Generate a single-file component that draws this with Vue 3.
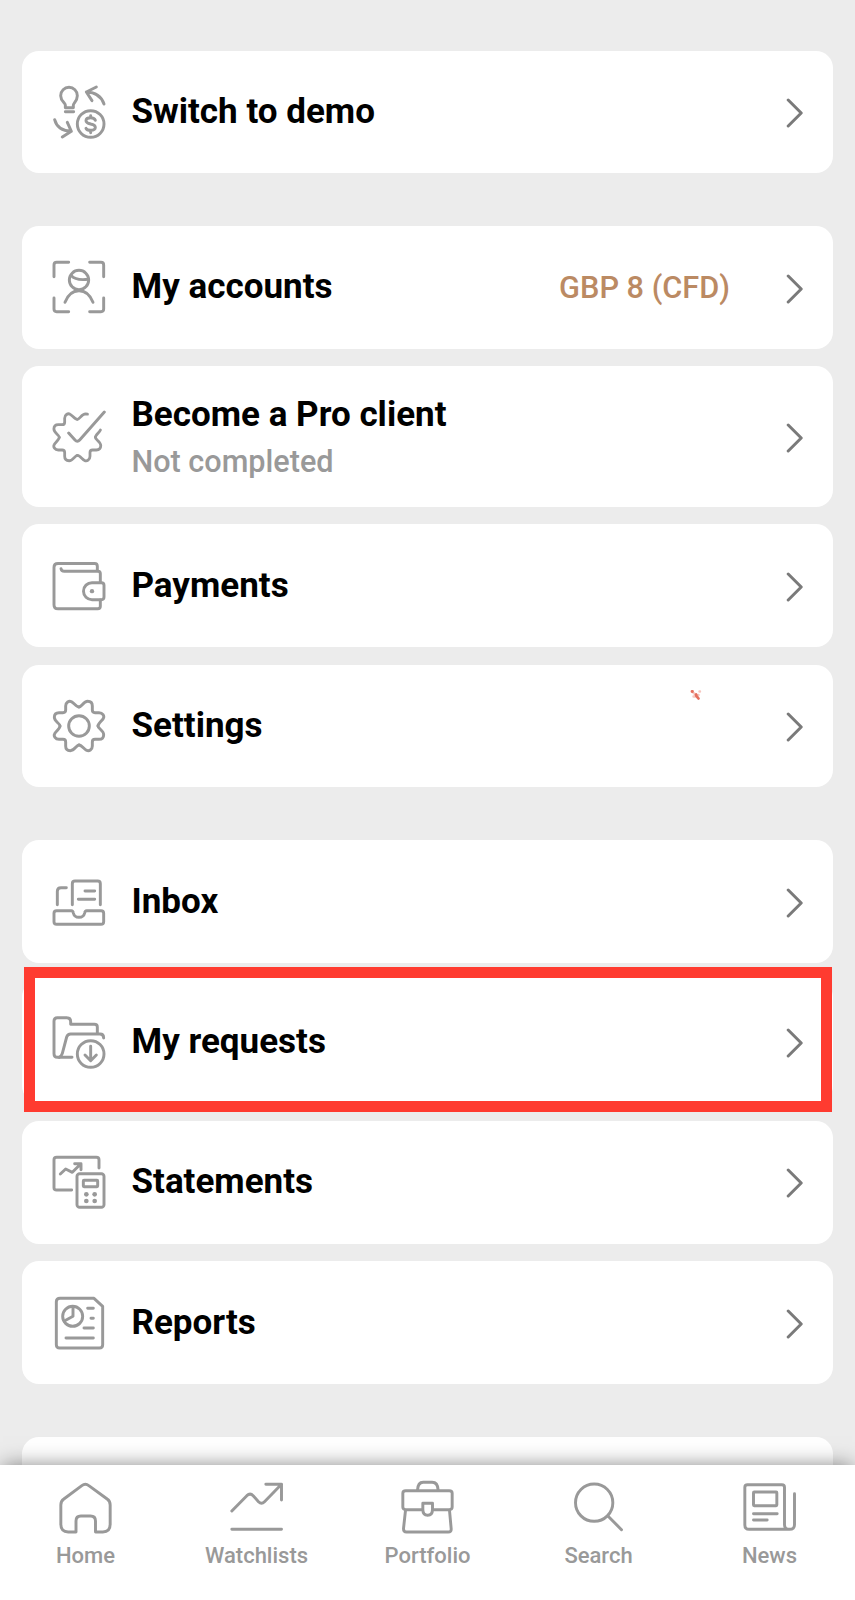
<template>
  <div class="screen">
    <main class="list">
      <section v-for="(group, g) in groups" :key="g" class="group">
        <div
          v-for="item in group"
          :key="item.title"
          class="card"
          :class="{ tall: item.sub, marked: item.marked }"
        >
          <svg class="icon" viewBox="0 0 162 162" v-html="icons[item.icon]"></svg>
          <div class="text">
            <div class="title">{{ item.title }}</div>
            <div v-if="item.sub" class="sub">{{ item.sub }}</div>
          </div>
          <div v-if="item.value" class="value">{{ item.value }}</div>
          <svg class="chevron" viewBox="0 0 18 30"><path d="M2.2 2 L15.2 15 L2.2 28" /></svg>
          <svg v-if="item.spark" class="spark" viewBox="0 0 12 12">
            <path class="soft" d="M3.500 4 L5 5 M9.500 2.500 H10 M3.500 7.500 H5 M8 6 H8.500" />
            <path d="M2 2.500 H2.500 M6 5.500 L6.500 7 L8.500 9.500" />
          </svg>
        </div>
      </section>
      <section class="group">
        <div class="card"></div>
      </section>
    </main>

    <nav class="tabs">
      <a v-for="tab in tabs" :key="tab.label" class="tab">
        <svg class="icon" viewBox="0 0 162 162" v-html="icons[tab.icon]"></svg>
        <span class="label">{{ tab.label }}</span>
      </a>
    </nav>
  </div>
</template>

<script setup>
const groups = [
  [{ title: 'Switch to demo', icon: 'swap' }],
  [
    { title: 'My accounts', icon: 'account', value: 'GBP 8 (CFD)' },
    { title: 'Become a Pro client', icon: 'pro', sub: 'Not completed' },
    { title: 'Payments', icon: 'wallet' },
    { title: 'Settings', icon: 'gear', spark: true },
  ],
  [
    { title: 'Inbox', icon: 'inbox' },
    { title: 'My requests', icon: 'requests', marked: true },
    { title: 'Statements', icon: 'statements' },
    { title: 'Reports', icon: 'reports' },
  ],
]

const tabs = [
  { label: 'Home', icon: 'home' },
  { label: 'Watchlists', icon: 'trend' },
  { label: 'Portfolio', icon: 'case' },
  { label: 'Search', icon: 'search' },
  { label: 'News', icon: 'news' },
]

// one quarter of the cog outline, rotated around the centre
const cog = 'M0 -57 C8 -57 13 -74 26 -74 C36 -74 40 -67 40 -60 V-48 Q40 -40 48 -40 H60 C71 -40 77 -30 73 -23 C70 -16 57 -8 57 0'
const turn = (deg) => `<path transform="rotate(${deg})" d="${cog}"/>`

const icons = {
  swap: `<path d="M40 68 V60 C40 54 26 48 26 32 A25 25 0 0 1 76 32 C76 48 64 54 64 60 V68 Z M40 80 H65"/>
    <path d="M133 6 L103 21 L120 47 M103 21 Q144 22 156 57"/>
    <path d="M31 156 L58 139 L46 112 M8 104 Q16 137 58 139"/>
    <circle cx="116" cy="117" r="40"/>
    <path d="M130 106 C128 100 123 98 116 98 C108 98 102 101 102 107 C102 113 108 115 116 117 C125 119 130 121 130 127 C130 133 124 136 116 136 C109 136 104 135 102 130 M116 92 V98 M116 136 V143"/>`,
  account: `<path d="M6 50 V15 Q6 7 14 7 H50 M113 7 H147 Q155 7 155 15 V50 M155 114 V147 Q155 155 147 155 H113 M50 155 H14 Q6 155 6 147 V114"/>
    <circle cx="81" cy="60" r="29"/>
    <path d="M58 47 Q70 62 108 58 M39 127 Q52 92 81 92 Q110 92 123 127"/>`,
  pro: `<g transform="translate(76 85) scale(.95)">${turn(90)}${turn(180)}${turn(270)}
    <path d="M0 -57 C8 -57 13 -74 26 -74 L32 -73 M73 -23 C70 -16 57 -8 57 0"/></g>
    <path d="M50 72 L69 93 Q76 101 83 93 L157 9"/>`,
  wallet: `<path d="M145 123 V142 Q145 149.500 137 149.500 H18 Q6 149.500 6 137 V25 Q6 13.500 18 13.500 H128 Q136 13.500 136 22 V35"/>
    <path d="M27 29 Q28 37 37 37 H138 Q145 37 145 44 V70"/>
    <path d="M120 71 H148 Q156 71 156 79 V114 Q156 122 148 122 H120 A25.500 25.500 0 0 1 120 71"/>
    <circle class="dot" cx="120" cy="96.500" r="6.500"/>`,
  gear: `<g transform="translate(81 81)">${turn(0)}${turn(90)}${turn(180)}${turn(270)}<circle r="31"/></g>`,
  inbox: `<path d="M14 110 H58 Q63 110 64 117 Q67 130 81 130 Q95 130 98 117 Q99 110 104 110 H147 Q155 110 155 118 V143 Q155 151 147 151 H14 Q6 151 6 143 V118 Q6 110 14 110 Z"/>
    <path d="M61 92 V29 Q61 21 69 21 H137 Q145 21 145 29 V92 M99 51 H128 M79 76 H128 M16 92 V52 Q16 41 27 41 H43"/>`,
  requests: `<path d="M60 127 H16 Q6 127 6 116 V18 Q6 8 16 8 H44 Q56 8 56 20 V28 H127 Q136 28 136 36 V55"/>
    <path d="M22 127 Q29 122 31 115 L44 66 Q47 57 56 57 H144 Q155 57 155 69"/>
    <circle cx="116" cy="117" r="40"/>
    <path d="M116 94 V136 M99 120 L116 137 L133 120"/>`,
  statements: `<path d="M59 105 H14 Q6 105 6 98 V14 Q6 7 14 7 H133 Q141 7 141 14 V39"/>
    <path d="M25 57 L41 42 L61 52 L86 27 M68 26 H87 V44"/>
    <rect x="75" y="56" width="81" height="101" rx="8"/>
    <rect x="94" y="76" width="43" height="19" rx="2"/>
    <g class="dot"><circle cx="103" cy="118" r="7"/><circle cx="128" cy="118" r="7"/><circle cx="103" cy="138" r="7"/><circle cx="128" cy="138" r="7"/></g>`,
  reports: `<path d="M24 7 H126 L152 31 V146 Q152 156 142 156 H23 Q13 156 13 146 V17 Q13 7 24 7 Z"/>
    <circle cx="62" cy="61" r="30"/>
    <path d="M63 32 V61 L37 75 M107 37 H124 M117 67 H124 M96 96 H124 M42 126 H124"/>`,
  home: `<path d="M52.500 156 H29 Q7 156 7 133 V75 Q7 63 16 57 L70 17 Q80.500 9 91 17 L146 57 Q155 63 155 75 V133 Q155 156 133 156 H111 V123 Q111 108 96 108 H67 Q52.500 108 52.500 123 Z"/>`,
  trend: `<path d="M7 93 L52 47 Q62 38 71 47 L87 65 Q96 74 105 65 L156 13 M109 13 H156 V60 M7 148 H156"/>`,
  case: `<path d="M51 31 Q52 7 68 7 H95 Q112 7 113 31"/>
    <path d="M65 89 H16 Q7 89 7 81 V40 Q7 32 16 32 H146 Q155 32 155 40 V81 Q155 89 146 89 H98"/>
    <path d="M67 70 H96 V88 Q96 106 81.500 106 Q67 106 67 88 Z"/>
    <path d="M15 91 L9 146 Q9 156 18 156 H143 Q153 156 152 146 L147 91"/>`,
  search: `<circle cx="68" cy="68" r="56"/><path d="M110 109 L150 149"/>`,
  news: `<path d="M141 148 H20 Q7 148 7 135 V22 Q7 14 15 14 H118 Q126 14 126 22 V134 Q126 148 141 148 Q156 148 156 134 V41"/>
    <rect x="33" y="36" width="70" height="41" rx="2"/>
    <path d="M33 101 H104 M33 120 H74"/>`,
}
</script>

<style>
body{margin:0;background:#ececec}
</style>

<style scoped>
.screen{display:flex;flex-direction:column;height:1600px;overflow:hidden;background:#ececec;font-family:Roboto,"Liberation Sans",sans-serif}
.list{flex:1;min-height:0;overflow:hidden;display:flex;flex-direction:column;gap:52.7px;padding:50.5px 22px 0}
.group{display:flex;flex-direction:column;gap:17.7px;flex:none}
.card{position:relative;display:flex;align-items:center;height:122.7px;box-sizing:border-box;padding:0 29px 0 30px;border-radius:17px;background:#fff}
.card.tall{height:140.4px}
.icon{width:54px;height:54px;flex:none;fill:none;stroke:#999;stroke-width:8.8;stroke-linecap:round;stroke-linejoin:round}
.icon :deep(.dot){fill:#999;stroke:none}
.text{flex:1;margin-left:25.5px}
.title{font-size:35px;line-height:42px;font-weight:700;color:#000;position:relative;top:.2px}
.tall .title{top:.6px}
.sub{position:relative;top:.6px;font-size:30.6px;line-height:36px;margin-top:8px;font-weight:500;color:#999}
.value{position:relative;top:.5px;font-size:30.7px;line-height:36px;font-weight:500;color:#bb8a63;margin-right:56px}
.chevron{position:relative;top:1.3px;width:18px;height:30px;flex:none;fill:none;stroke:#7a7a7a;stroke-width:3;stroke-linecap:round;stroke-linejoin:round}

/* red frame lies over the card and sticks out of it top and bottom */
.marked{z-index:1}
.marked::before{content:"";position:absolute;z-index:-1;left:2px;right:1px;top:-13.5px;bottom:-9px;border:11px solid #ff3b30;background:#fff}

.spark{position:absolute;right:131px;top:24px;width:12px;height:12px;fill:none;stroke:#e5705f;stroke-width:2.8;stroke-linecap:round}
.spark .soft{stroke:#f6c6bf;stroke-width:2.4}

.tabs{position:relative;z-index:2;flex:none;display:grid;grid-template-columns:repeat(5,1fr);height:135px;background:#fff;box-shadow:0 -2px 20px -3px rgba(0,0,0,.5)}
.tab{display:flex;flex-direction:column;align-items:center;padding-top:15px}
.tab .icon{width:55px}
.label{margin-top:9px;font-size:22px;line-height:26px;font-weight:500;color:#999}
</style>
